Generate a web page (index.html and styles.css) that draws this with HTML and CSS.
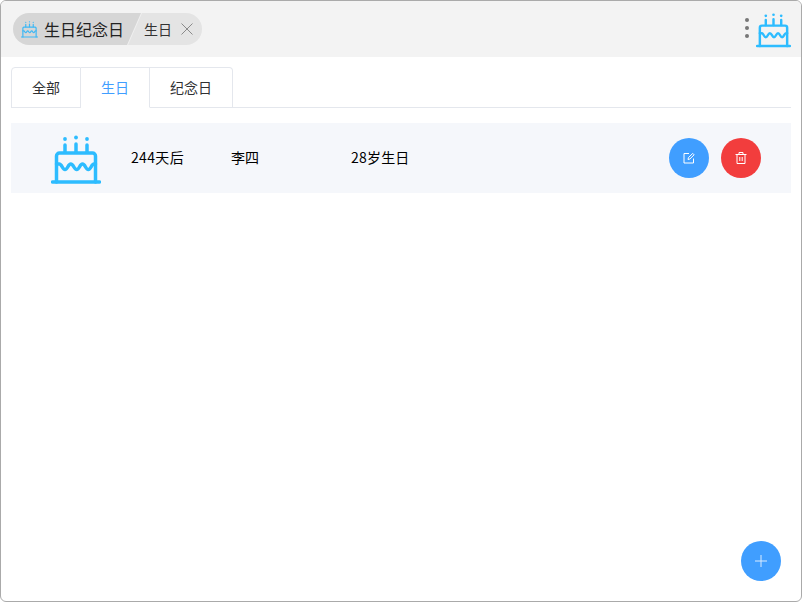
FILE: index.html
```html
<!DOCTYPE html>
<html lang="zh">
<head>
<meta charset="utf-8">
<title>生日纪念日</title>
<link rel="stylesheet" href="styles.css">
</head>
<body>
<svg class="defs" width="0" height="0" aria-hidden="true">
  <symbol id="cake" viewBox="0 0 50 50">
    <g fill="none" stroke="currentColor" stroke-width="3.500" stroke-linecap="round" stroke-linejoin="round">
      <path d="M1.500 47h47"/>
      <path d="M5.500 47V21a3 3 0 0 1 3-3h33a3 3 0 0 1 3 3v26"/>
      <path d="M5.500 29H8.200C11 29 11.200 34.500 14 34.500S17 29 19.800 29S22.900 34.500 25.700 34.500S28.700 29 31.500 29S34.500 34.500 37.300 34.500S40.300 29 43 29H44.500"/>
      <path d="M14 17V10M25 17V9M36 17V10"/>
    </g>
    <g fill="currentColor">
      <circle cx="14" cy="4" r="1.900"/>
      <circle cx="25" cy="2.500" r="1.900"/>
      <circle cx="36" cy="4" r="1.900"/>
    </g>
  </symbol>
</svg>
<div class="window">
  <header class="titlebar">
    <div class="crumbs">
      <div class="crumb-main">
        <svg class="crumb-icon"><use href="#cake"/></svg>
        <span>生日纪念日</span>
      </div>
      <div class="crumb-sub">
        <span>生日</span>
        <svg class="close-icon" viewBox="0 0 12 12"><path d="M.5.500l11 11M11.500.500l-11 11"/></svg>
      </div>
    </div>
    <div class="title-actions">
      <div class="dots"><i></i><i></i><i></i></div>
      <svg class="title-cake"><use href="#cake"/></svg>
    </div>
  </header>
  <main class="content">
    <nav class="tabs">
      <div class="tab">全部</div>
      <div class="tab active">生日</div>
      <div class="tab">纪念日</div>
    </nav>
    <section class="row">
      <svg class="row-cake"><use href="#cake"/></svg>
      <div class="cell days">244天后</div>
      <div class="cell name">李四</div>
      <div class="cell note">28岁生日</div>
      <div class="row-actions">
        <button class="round blue" aria-label="编辑">
          <svg viewBox="0 0 12 12"><path d="M10.500 6.500v4.500h-9.500v-9.500h5"/><path d="M5 7.500l.4-1.800 4.300-4.300 1.400 1.400-4.300 4.300z"/></svg>
        </button>
        <button class="round red" aria-label="删除">
          <svg viewBox="0 0 12 12"><path d="M.5 2.500h11M4 2.500v-2h4v2M2 2.500v9h8v-9M4.800 5v4M7.200 5v4"/></svg>
        </button>
      </div>
    </section>
    <button class="round blue add" aria-label="添加">
      <svg viewBox="0 0 12 12"><path d="M6 0v12M0 6h12"/></svg>
    </button>
  </main>
</div>
</body>
</html>
```
FILE: styles.css
```css
* { box-sizing: border-box; }
html, body { margin: 0; padding: 0; height: 100%; background: #fff; }
body { font-family: "Noto Sans CJK SC", "Liberation Sans", sans-serif; color: #000; overflow: hidden; }
.defs { position: absolute; }
.window {
  width: 802px; height: 602px;
  border: 1px solid #aaa;
  border-radius: 6px;
  overflow: hidden;
  display: flex; flex-direction: column;
  background: #fff;
}
.titlebar {
  height: 56px; flex: none;
  background: #f3f3f3;
  display: flex; align-items: center; justify-content: space-between;
  padding: 0 10px 0 12px;
}
.crumbs {
  display: flex; height: 32px; width: 189px;
  border-radius: 16px; overflow: hidden;
  background: #f0f0f0;
}
.crumb-main {
  width: 128px; height: 32px; flex: none;
  background: #d6d6d6;
  clip-path: polygon(0 0, 100% 0, 114px 100%, 0 100%);
  display: flex; align-items: center;
  padding-left: 8px; gap: 6px;
  font-size: 16px; color: #222;
}
.crumb-icon { width: 17px; height: 17px; color: #3db8f5; flex: none; }
.crumb-sub {
  flex: 1; margin-left: -13px;
  background: #e4e4e4;
  clip-path: polygon(14px 0, 100% 0, 100% 100%, 0 100%);
  display: flex; align-items: center;
  font-size: 14px; color: #333;
  padding-left: 16px; gap: 9px;
}
.close-icon { width: 12px; height: 12px; fill: none; stroke: #8a8a8a; stroke-width: 1; }
.title-actions { display: flex; align-items: center; gap: 7px; }
.dots { display: flex; flex-direction: column; gap: 4px; margin-bottom: 2px; }
.dots i { display: block; width: 4px; height: 4px; border-radius: 50%; background: #777; }
.title-cake { width: 35px; height: 35px; margin-top: 3px; color: #2dbcff; }
.content { flex: 1; position: relative; padding: 10px 10px 0; }
.tabs {
  display: flex; height: 41px;
  border-bottom: 1px solid #e4e7ed;
}
.tab {
  height: 41px; padding: 0 20px;
  border: 1px solid #e4e7ed; border-left: 0;
  font-size: 14px; line-height: 38px; color: #303133;
}
.tab:first-child { border-left: 1px solid #e4e7ed; border-top-left-radius: 4px; }
.tab:last-child { border-top-right-radius: 4px; }
.tab.active { color: #409eff; border-bottom-color: #fff; }
.row {
  margin-top: 15px; height: 70px;
  background: #f5f7fb;
  display: flex; align-items: center;
  font-size: 14px;
}
.row-cake { width: 50px; height: 50px; margin: 4px 0 0 40px; color: #2dbcff; flex: none; }
.cell { flex: none; padding-bottom: 2px; }
.days { margin-left: 30px; width: 100px; letter-spacing: .35px; }
.name { width: 120px; }
.note { width: 100px; letter-spacing: .2px; }
.row-actions { margin-left: auto; margin-right: 30px; display: flex; gap: 12px; }
.round {
  width: 40px; height: 40px; padding: 0;
  border: 0; border-radius: 50%;
  display: flex; align-items: center; justify-content: center;
  color: #fff;
}
.round svg { width: 12px; height: 12px; fill: none; stroke: currentColor; stroke-width: 1; }
.blue { background: #409eff; }
.red { background: #f23d3d; }
.add { position: absolute; right: 20px; bottom: 20px; }
.add svg { stroke: #d9ebff; }
```
